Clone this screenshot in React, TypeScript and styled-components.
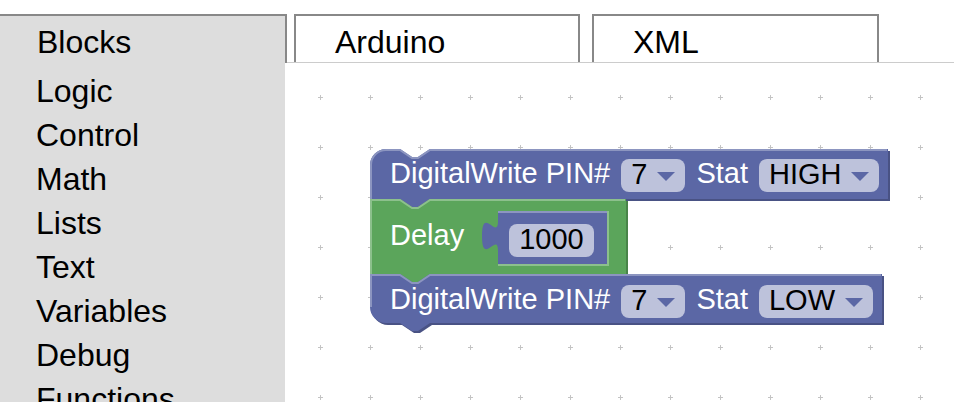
import React from "react";
import styled, { createGlobalStyle } from "styled-components";

const GlobalStyle = createGlobalStyle`
  html, body {
    margin: 0;
    padding: 0;
    overflow: hidden;
    background: #ffffff;
  }
  #root { height: 100%; }
`;

const BLUE = { main: "#5b67a5", light: "#8c95c0", dark: "#495284", field: "#bdc2db" };
const GREEN = { main: "#5ba55b", light: "#8cc08c", dark: "#498449" };
type Palette = { main: string; light: string; dark: string };

const Page = styled.div`
  height: 100vh;
  box-sizing: border-box;
  padding-top: 14px;
  display: flex;
  flex-direction: column;
  font-family: "Liberation Sans", Arial, sans-serif;
  color: #000;
`;

const HeaderRow = styled.div`
  display: flex;
  height: 49px;
  flex-shrink: 0;
`;

const BlocksTab = styled.div`
  width: 287px;
  height: 49px;
  box-sizing: border-box;
  background: #dddddd;
  border-top: 2px solid #888888;
  border-right: 2px solid #888888;
  padding: 6px 0 0 37px;
  font-size: 32px;
  line-height: 40px;
`;

const TabStrip = styled.div`
  flex: 1;
  display: flex;
  align-items: flex-start;
  height: 49px;
  box-sizing: border-box;
  border-bottom: 1px solid #cccccc;
`;

const Tab = styled.div<{ $w: number; $ml: number }>`
  width: ${(p) => p.$w}px;
  margin-left: ${(p) => p.$ml}px;
  height: 48px;
  box-sizing: border-box;
  background: #ffffff;
  border: 2px solid #888888;
  border-bottom: none;
  padding: 6px 0 0 39px;
  font-size: 32px;
  line-height: 40px;
`;

const MainRow = styled.div`
  flex: 1;
  display: flex;
  min-height: 0;
`;

const Toolbox = styled.div`
  width: 285px;
  flex-shrink: 0;
  box-sizing: border-box;
  background: #dddddd;
  padding: 6px 0 0 36px;
  font-size: 32px;
  line-height: 44px;
`;

const Category = styled.div`
  white-space: nowrap;
`;

const Workspace = styled.div`
  flex: 1;
  position: relative;
  overflow: hidden;
  background: #ffffff;
`;

const GridLayer = styled.svg`
  position: absolute;
  left: 0;
  top: 0;
  width: 100%;
  height: 100%;
`;

const BlockStack = styled.div`
  position: absolute;
  left: 85px;
  top: 86px;
  display: flex;
  flex-direction: column;
  align-items: flex-start;
`;

const BlockShell = styled.div<{ $w: number; $h: number }>`
  position: relative;
  width: ${(p) => p.$w}px;
  height: ${(p) => p.$h}px;
  flex-shrink: 0;
`;

const ShapeSvg = styled.svg`
  position: absolute;
  left: 0;
  top: 0;
  overflow: visible;
`;

const Fields = styled.div<{ $pt: number; $gap: number; $center?: boolean; $pl?: number }>`
  position: relative;
  height: 100%;
  box-sizing: border-box;
  display: flex;
  align-items: ${(p) => (p.$center ? "center" : "flex-start")};
  gap: ${(p) => p.$gap}px;
  padding: ${(p) => p.$pt}px 0 0 ${(p) => p.$pl ?? 20}px;
  font-family: "Liberation Sans", Arial, sans-serif;
  font-size: 29px;
`;

const Label = styled.span`
  color: #ffffff;
  line-height: 28px;
  padding-bottom: 5px;
  white-space: nowrap;
`;

const Pill = styled.span`
  display: inline-flex;
  align-items: flex-start;
  gap: 10px;
  height: 33px;
  box-sizing: border-box;
  padding: 1px 10px 0;
  border-radius: 8px;
  background: ${BLUE.field};
  color: #000000;
  white-space: nowrap;
`;

const PillText = styled.span`
  line-height: 28px;
`;

const Arrow = styled.svg`
  align-self: center;
  flex-shrink: 0;
`;

const ValueSlot = styled.div<{ $ml: number }>`
  position: relative;
  margin-left: ${(p) => p.$ml}px;
`;

type ShapeOpts = { roundTop?: boolean; roundBottom?: boolean; notch?: boolean; tab?: boolean };
const R = 16;

function outline(w: number, h: number, o: ShapeOpts): string {
  let d = o.roundTop ? `M 0,${R} A ${R},${R} 0 0,1 ${R},0` : "M 0,0";
  if (o.notch) d += " H 30 l 12,8 h 6 l 12,-8";
  d += ` H ${w} V ${h}`;
  if (o.tab) d += " H 60 l -12,8 h -6 l -12,-8";
  d += o.roundBottom ? ` H ${R} A ${R},${R} 0 0,1 0,${h - R}` : " H 0";
  return d + " Z";
}

function highlight(w: number, h: number, o: ShapeOpts): string {
  const bottom = o.roundBottom ? h - R : h;
  let d = o.roundTop
    ? `M 1,${bottom} V ${R} A ${R - 1},${R - 1} 0 0,1 ${R},1`
    : `M 1,${bottom} V 1`;
  if (o.notch) d += " H 30 l 12,8 h 6 l 12,-8";
  d += ` H ${w - 1}`;
  return d;
}

function BlockShape({
  w,
  h,
  opts,
  pal,
  hole,
}: {
  w: number;
  h: number;
  opts: ShapeOpts;
  pal: Palette;
  hole?: { x: number; y: number; w: number; h: number };
}) {
  const d = outline(w, h, opts);
  return (
    <ShapeSvg width={w} height={h}>
      <path d={d} fill={pal.dark} transform="translate(2,2)" />
      <path d={d} fill={pal.main} />
      <path d={highlight(w, h, opts)} fill="none" stroke={pal.light} strokeWidth={2} />
      {hole && (
        <path
          d={`M ${hole.x + hole.w + 1},${hole.y} V ${hole.y + hole.h + 1} H ${hole.x}`}
          fill="none"
          stroke={pal.light}
          strokeWidth={2}
        />
      )}
    </ShapeSvg>
  );
}

function DropArrow() {
  return (
    <Arrow width={18} height={9} viewBox="0 0 18 9">
      <polygon points="0,0 18,0 9,9" fill={BLUE.main} />
    </Arrow>
  );
}

function Dropdown({ value }: { value: string }) {
  return (
    <Pill>
      <PillText>{value}</PillText>
      <DropArrow />
    </Pill>
  );
}

function NumberBlock({ value, w, h }: { value: string; w: number; h: number }) {
  const d = `M 0,0 H ${w} V ${h} H 0 V 40 c 0,-20 -16,16 -16,-15 s 16,5 16,-15 Z`;
  return (
    <BlockShell $w={w} $h={h}>
      <ShapeSvg width={w} height={h}>
        <path d={d} fill={BLUE.main} />
        <path d={`M 0,1 H ${w}`} stroke={BLUE.light} strokeWidth={2} fill="none" />
      </ShapeSvg>
      <Fields $pt={13} $gap={0} $pl={11}>
        <Pill>
          <PillText>{value}</PillText>
        </Pill>
      </Fields>
    </BlockShell>
  );
}

function DigitalWriteBlock({
  w,
  h,
  pt,
  pin,
  state,
  opts,
}: {
  w: number;
  h: number;
  pt: number;
  pin: string;
  state: string;
  opts: ShapeOpts;
}) {
  return (
    <BlockShell $w={w} $h={h}>
      <BlockShape w={w} h={h} opts={opts} pal={BLUE} />
      <Fields $pt={pt} $gap={11}>
        <Label>DigitalWrite PIN#</Label>
        <Dropdown value={pin} />
        <Label>Stat</Label>
        <Dropdown value={state} />
      </Fields>
    </BlockShell>
  );
}

function DelayBlock() {
  const w = 256;
  const h = 75;
  return (
    <BlockShell $w={w} $h={h}>
      <BlockShape
        w={w}
        h={h}
        opts={{ notch: true, tab: true }}
        pal={GREEN}
        hole={{ x: 128, y: 12, w: 109, h: 53 }}
      />
      <Fields $pt={2} $gap={0} $center>
        <Label>Delay</Label>
        <ValueSlot $ml={34}>
          <NumberBlock value="1000" w={109} h={53} />
        </ValueSlot>
      </Fields>
    </BlockShell>
  );
}

function Grid() {
  return (
    <GridLayer>
      <defs>
        <pattern id="ws-grid" x={10} y={9} width={50} height={50} patternUnits="userSpaceOnUse">
          <rect x={23} y={25} width={5} height={1} fill="#c4c4c4" />
          <rect x={25} y={23} width={1} height={5} fill="#c4c4c4" />
        </pattern>
      </defs>
      <rect width="100%" height="100%" fill="url(#ws-grid)" />
    </GridLayer>
  );
}

const categories = ["Logic", "Control", "Math", "Lists", "Text", "Variables", "Debug", "Functions"];

export default function App() {
  return (
    <>
      <GlobalStyle />
      <Page>
        <HeaderRow>
          <BlocksTab>Blocks</BlocksTab>
          <TabStrip>
            <Tab $w={286} $ml={7}>Arduino</Tab>
            <Tab $w={287} $ml={12}>XML</Tab>
          </TabStrip>
        </HeaderRow>
        <MainRow>
          <Toolbox>
            {categories.map((c) => (
              <Category key={c}>{c}</Category>
            ))}
          </Toolbox>
          <Workspace>
            <Grid />
            <BlockStack>
              <DigitalWriteBlock
                w={518}
                h={50}
                pt={10}
                pin="7"
                state="HIGH"
                opts={{ roundTop: true, notch: true, tab: true }}
              />
              <DelayBlock />
              <DigitalWriteBlock
                w={512}
                h={49}
                pt={11}
                pin="7"
                state="LOW"
                opts={{ notch: true, tab: true, roundBottom: true }}
              />
            </BlockStack>
          </Workspace>
        </MainRow>
      </Page>
    </>
  );
}
